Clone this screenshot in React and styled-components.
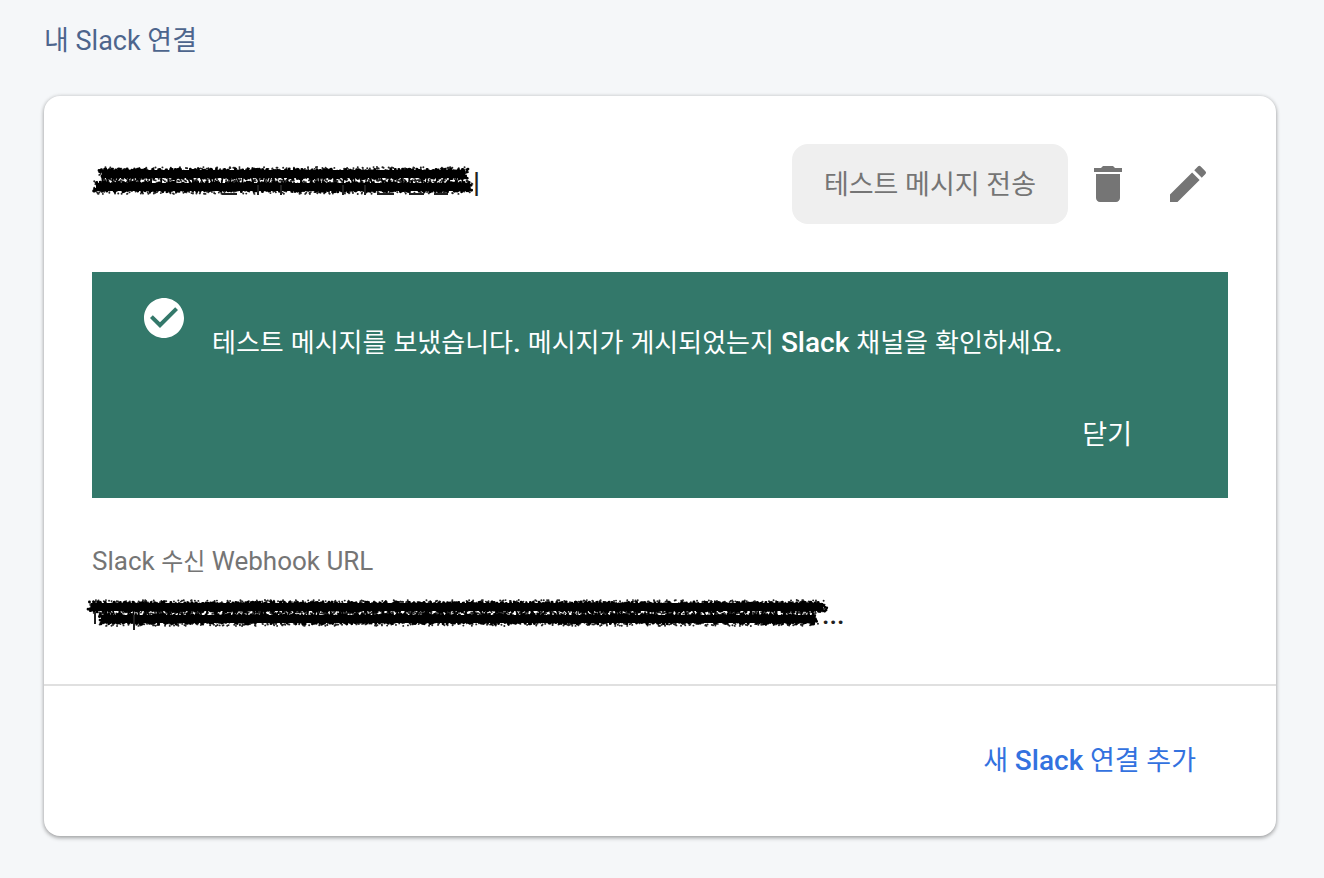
import styled, { createGlobalStyle } from "styled-components";
import { MdCheckCircle, MdDelete, MdEdit } from "react-icons/md";

const GlobalStyle = createGlobalStyle`
  *, *::before, *::after {
    box-sizing: border-box;
  }

  body {
    margin: 0;
    background: #f5f7f9;
    color: #212121;
    font-family: Roboto, "Noto Sans CJK KR", sans-serif;
    font-size: 27px;
    line-height: 40px;
  }
`;

const Page = styled.main`
  padding: 21px 48px 42px 44px;
`;

const PageTitle = styled.h1`
  margin: 0 0 35px;
  color: #4d658d;
  font-size: 27px;
  font-weight: 400;
`;

const Card = styled.section`
  border-radius: 16px;
  background: #fff;
  box-shadow: 0 2px 4px rgba(0, 0, 0, 0.3), 0 0 4px rgba(0, 0, 0, 0.14);
`;

const Connection = styled.div`
  padding: 48px 48px 49px;
`;

const Header = styled.header`
  display: flex;
  align-items: center;
  margin-bottom: 48px;
`;

const Name = styled.h2`
  display: flex;
  flex: 1;
  min-width: 0;
  margin: 0;
  padding-top: 2px;
  font-size: 27px;
  font-weight: 400;
`;

const TestButton = styled.button`
  height: 80px;
  padding: 2px 32px 0;
  border: 0;
  border-radius: 16px;
  background: #efefef;
  color: #757575;
  font: inherit;
  cursor: pointer;
`;

const IconButton = styled.button`
  display: flex;
  align-items: center;
  justify-content: center;
  width: 80px;
  height: 80px;
  padding: 0;
  border: 0;
  background: none;
  color: #757575;
  font-size: 48px;
  cursor: pointer;
`;

const Banner = styled.div`
  display: flex;
  align-items: flex-start;
  gap: 24px;
  padding: 22px 48px 24px;
  background: #33786a;
  color: #fff;
`;

const BannerIcon = styled(MdCheckCircle)`
  flex: none;
  width: 48px;
  height: 48px;
`;

const BannerBody = styled.div`
  display: flex;
  flex: 1;
  flex-direction: column;
  padding-top: 29px;
`;

// 한글은 라틴 문자보다 한 단계 작고 가늘게
const Message = styled.p`
  margin: 0 0 31px;
  font-size: 28px;
  font-weight: 500;
`;

const Hangul = styled.span`
  font-size: ${({ $size }) => $size}px;
  font-weight: 400;
  line-height: 1;
`;

const Latin = styled.span`
  font-size: 28px;
  font-weight: 500;
  line-height: 1;
`;

const TextButton = styled.button`
  align-self: flex-end;
  height: 80px;
  padding: 2px 32px 0;
  border: 0;
  background: none;
  color: ${({ $color }) => $color};
  font: inherit;
  cursor: pointer;
`;

const CloseButton = styled(TextButton)`
  padding: 2px 48px 0;
`;

const Field = styled.dl`
  margin: 43px 0 0;
`;

const Label = styled.dt`
  color: #757575;
  font-size: 26px;
`;

const Value = styled.dd`
  display: flex;
  margin: 14px 0 0;
  font-weight: 500;
`;

const Footer = styled.footer`
  display: flex;
  justify-content: flex-end;
  padding: 34px 48px 36px;
  border-top: 2px solid #e0e0e0;
`;

const Hidden = styled.span`
  position: relative;
  flex: none;
  width: ${({ $width }) => $width}px;
  height: 40px;
`;

const Ink = styled.svg`
  position: absolute;
  top: 0;
  left: -8px;
  overflow: visible;
`;

// 매번 같은 모양이 나오도록 고정 시드 사용
const createRandom = (seed) => {
  let value = seed;
  return () => {
    value = (value * 16807) % 2147483647;
    return value / 2147483647;
  };
};

// 거친 붓 자국: 띠 안쪽에 점을 무작위로 찍는다
const brush = ([from, to, y], half, count, random) => {
  let d = "";
  for (let x = from; x < to; x += 1) {
    for (let i = 0; i < count; i += 1) {
      const dx = x + random() * 3 - 1;
      const dy = y + (random() * 2 - 1) * half;
      d += `M${dx.toFixed(1)} ${dy.toFixed(1)}h0.1`;
    }
  }
  return d;
};

function Scribble({ width, top, bottom, seed, marks }) {
  const random = createRandom(seed);
  const clumps = brush(top, 5, 2, random) + brush(bottom, 5, 2, random);
  const specks = brush(top, 7, 2, random) + brush(bottom, 7, 2, random);
  const middle = (top[2] + bottom[2]) / 2;
  let stems = "";
  for (let x = bottom[0] + 8; x < bottom[1] - 4; x += 4 + random() * 8) {
    stems += `M${x.toFixed(1)} ${middle - 4}l${(random() * 8 - 4).toFixed(1)} 8`;
  }

  return (
    <Ink width={width} height="40" fill="none" stroke="#000" aria-hidden="true">
      <path
        d={`M${top[0] + 2} ${top[2]}H${top[1] - 3}M${bottom[0] + 2} ${bottom[2]}H${bottom[1] - 2}`}
        strokeWidth="8"
      />
      <path d={clumps} strokeWidth="2.8" strokeLinecap="round" />
      <path d={specks} strokeWidth="1.9" strokeLinecap="round" opacity="0.85" />
      <path d={stems} strokeWidth="1.6" />
      <path d={marks} stroke="#212121" strokeWidth="2" />
    </Ink>
  );
}

export default function App() {
  return (
    <>
      <GlobalStyle />
      <Page>
        <PageTitle>내 Slack 연결</PageTitle>
        <Card>
          <Connection>
            <Header>
              <Name>
                <Hidden $width={372}>
                  <Scribble
                    width={390}
                    top={[16, 384, 9]}
                    bottom={[10, 388, 22]}
                    seed={731}
                    marks="M138 29H153M174 20V30M197 20V30M259 20V30M281 20V30M293 29H310M325 29H340M350 29H364"
                  />
                </Hidden>
                ㅣ
              </Name>
              <TestButton type="button">테스트 메시지 전송</TestButton>
              <IconButton type="button" aria-label="삭제">
                <MdDelete />
              </IconButton>
              <IconButton type="button" aria-label="수정">
                <MdEdit />
              </IconButton>
            </Header>
            <Banner role="status">
              <BannerIcon />
              <BannerBody>
                <Message>
                  <Hangul $size={26}>테스트</Hangul>{" "}
                  <Hangul $size={26}>메시지를</Hangul>{" "}
                  <Hangul $size={26}>보냈습니다</Hangul>.{" "}
                  <Hangul $size={26}>메시지가</Hangul>{" "}
                  <Hangul $size={26}>게시되었는지</Hangul> Slack{" "}
                  <Hangul $size={26}>채널을</Hangul>{" "}
                  <Hangul $size={26}>확인하세요</Hangul>.
                </Message>
                <CloseButton type="button" $color="#fff">
                  닫기
                </CloseButton>
              </BannerBody>
            </Banner>
            <Field>
              <Label>
                Slack <Hangul $size={24}>수신</Hangul> Webhook URL
              </Label>
              <Value>
                <Hidden $width={730}>
                  <Scribble
                    width={746}
                    top={[5, 742, 12]}
                    bottom={[15, 733, 24]}
                    seed={492}
                    marks="M11 17V29M50 20V35"
                  />
                </Hidden>
                ...
              </Value>
            </Field>
          </Connection>
          <Footer>
            <TextButton type="button" $color="#3372df">
              새 <Latin>Slack</Latin> 연결 추가
            </TextButton>
          </Footer>
        </Card>
      </Page>
    </>
  );
}
